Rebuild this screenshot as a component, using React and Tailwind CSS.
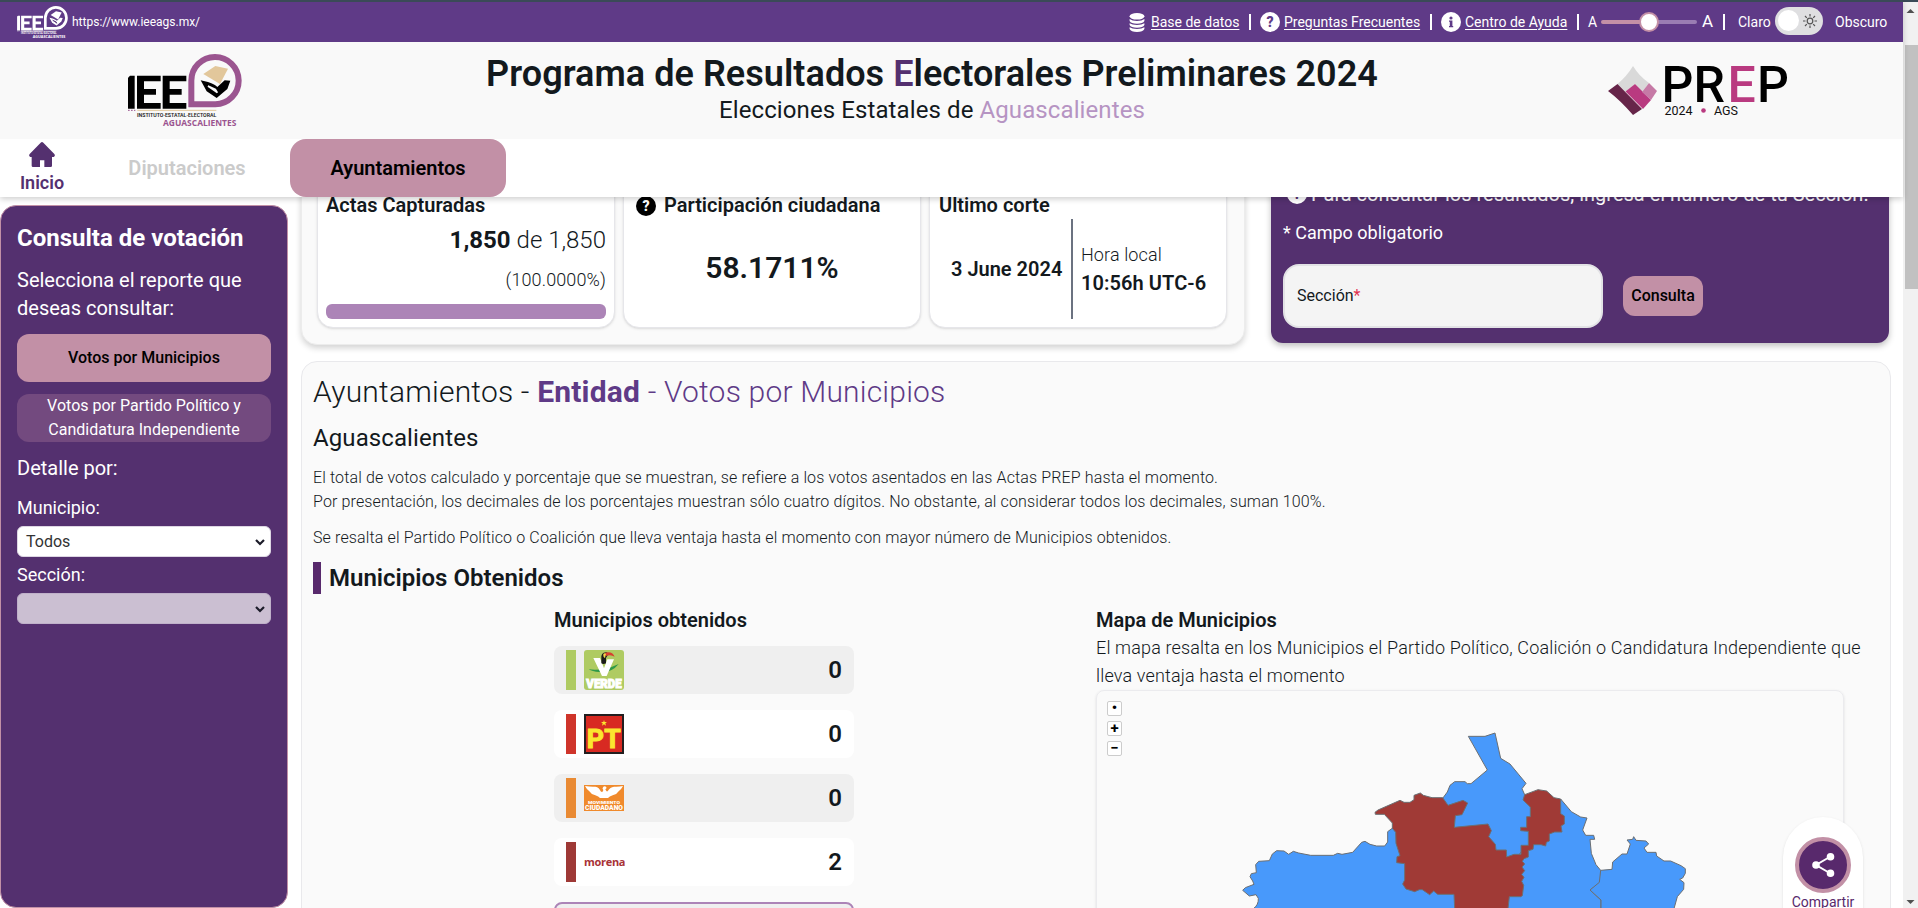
import React from "react";

const parties = [
  { bar: "bg-[#afcb62]", row: "bg-[#efefef]", votes: 0, logo: <VerdeLogo /> },
  { bar: "bg-[#cf352b]", row: "bg-white", votes: 0, logo: <PtLogo /> },
  { bar: "bg-[#e98a33]", row: "bg-[#efefef]", votes: 0, logo: <McLogo /> },
  {
    bar: "bg-[#9e3936]",
    row: "bg-white",
    votes: 2,
    logo: (
      <span className="block w-10 font-['Open_Sans',sans-serif] text-[11px] leading-[38px] font-bold tracking-[-0.3px] text-[#a83236]">
        morena
      </span>
    ),
  },
];

function VerdeLogo() {
  return (
    <svg className="size-10" viewBox="0 0 120 120">
      <rect width="120" height="120" rx="9" fill="#afcb62" />
      <path d="M14 58Q58 64 104 42Q82 70 46 66Q24 65 14 58Z" fill="#2f9a48" />
      <path d="M28 24H48L60 55L70 28H90L68 78H54Z" fill="#fff" />
      <path d="M52 26Q50 8 66 7Q72 6 72 14L66 24V40Q58 44 52 40Z" fill="#1c1c1a" />
      <path d="M62 9Q84 2 92 20Q80 12 66 18Z" fill="#d8402f" />
      <path d="M58 12Q62 8 66 12L63 24Q57 22 58 12Z" fill="#f7d54b" />
      <text x="60" y="114" textAnchor="middle" fill="#fff" stroke="#fff" strokeWidth="3" fontFamily="Roboto, sans-serif" fontWeight="900" fontSize="37" textLength="106" lengthAdjust="spacingAndGlyphs">VERDE</text>
    </svg>
  );
}

function PtLogo() {
  return (
    <svg className="size-10" viewBox="0 0 120 120">
      <rect x="3" y="3" width="114" height="114" fill="#d82a22" stroke="#231f20" strokeWidth="6" />
      <path d="M60 18L62 24H69L64 28L66 35L60 31L54 35L56 28L51 24H58Z" fill="#fbe52f" />
      <g fill="#fbe52f" stroke="#fbe52f" strokeWidth="3" fontFamily="Roboto, sans-serif" fontWeight="700" fontSize="80">
        <text x="8" y="102">P</text>
        <text x="61" y="102">T</text>
      </g>
    </svg>
  );
}

function McLogo() {
  return (
    <svg className="h-10 w-10" viewBox="0 0 120 120">
      <rect y="21" width="120" height="78" fill="#f08a2c" />
      <path d="M3 24Q20 27 34 26Q46 28 50 40Q56 45 58 36Q53 32 58 26Q66 23 68 30L64 34Q68 44 72 38Q78 27 90 26Q104 27 117 24Q112 34 104 40Q98 50 86 52Q76 56 72 60H48Q44 56 34 52Q22 50 16 40Q8 34 3 24Z" fill="#fff" />
      <text x="60" y="78" textAnchor="middle" fill="#fff" fontFamily="Roboto, sans-serif" fontWeight="900" fontSize="13" textLength="96" lengthAdjust="spacingAndGlyphs">MOVIMIENTO</text>
      <text x="60" y="95" textAnchor="middle" fill="#fff" fontFamily="Roboto, sans-serif" fontWeight="900" fontSize="20" textLength="114" lengthAdjust="spacingAndGlyphs">CIUDADANO</text>
    </svg>
  );
}

function IeeLogo({ className, ink, ring, paper, sub, place }) {
  return (
    <svg className={className} viewBox="0 0 342 222">
      <g fill={ink}>
        <path d="M6 65H20V164H0V71Z" />
        <path d="M27 65H98V82H48V105H84V122H48V147H98V164H27Z" />
        <path d="M104 65H175V82H125V105H161V122H125V147H175V164H104Z" />
      </g>
      <path d="M190 151V80A71 71 0 1 1 262 151Z" fill="none" stroke={ring} strokeWidth="18" />
      <path d="M226 60L262 36L300 44L276 90Z" fill={paper} />
      <path d="M218 79L240 84Q262 92 268 99L290 79L307 80L298 105L266 132L236 112Z" fill={ink} />
      <path d="M240 96L262 106L268 116Z" stroke={sub === "#fff" ? "#5f3a87" : "#f9f9f9"} strokeWidth="5" />
      <path d="M0 169H22" stroke={ring} strokeWidth="3" strokeDasharray="5 4" />
      <path d="M28 169H265" stroke={paper} strokeWidth="3" />
      <text x="27" y="189" fill={sub} fontFamily="Roboto, sans-serif" fontWeight="600" fontSize="18" textLength="238" lengthAdjust="spacingAndGlyphs">INSTITUTO·ESTATAL·ELECTORAL</text>
      <text x="105" y="216" fill={place} fontFamily="'Open Sans', sans-serif" fontWeight="700" fontSize="25" textLength="220" lengthAdjust="spacingAndGlyphs">AGUASCALIENTES</text>
    </svg>
  );
}

function HelpMark({ className, glyph, fill, ink }) {
  return (
    <svg className={className} viewBox="0 0 20 20">
      <circle cx="10" cy="10" r="10" fill={fill} />
      <text x="10" y="15" textAnchor="middle" fill={ink} fontFamily="Roboto, sans-serif" fontWeight="900" fontSize="14">{glyph}</text>
    </svg>
  );
}

function InfoMark() {
  return (
    <svg className="size-5" viewBox="0 0 20 20">
      <circle cx="10" cy="10" r="10" fill="#fff" />
      <circle cx="10" cy="6" r="1.6" fill="#5f3a87" />
      <path d="M8 8.5H11.4V14H12.2V15.2H8V14H8.8V9.8H8Z" fill="#5f3a87" />
    </svg>
  );
}

function DatabaseIcon() {
  return (
    <svg className="h-[19px] w-4" viewBox="0 0 16 19" fill="#fff">
      <ellipse cx="8" cy="3.3" rx="7.4" ry="3.3" />
      <path d="M.6 6Q3 8 8 8T15.400 6V8Q14 10.800 8 10.800T.6 8Z" />
      <path d="M.6 10.200Q3 12 8 12T15.400 10.200V12Q14 14.800 8 14.800T.6 12Z" />
      <path d="M.6 14.300Q3 16 8 16T15.400 14.300V16Q14 19 8 19T.6 16Z" />
    </svg>
  );
}

function TopBar() {
  return (
    <div className="flex h-[42px] items-center border-t-2 border-[#3a4a57] bg-[#5f3a87] pr-[13px] pl-[17px] text-[14px] text-white">
      <IeeLogo className="h-[33px] w-[51px]" ink="#fff" ring="#fff" paper="#fff" sub="#fff" place="#fff" />
      <span className="ml-1 w-[128px] text-[12px] whitespace-nowrap">https://www.ieeags.mx/</span>
      <div className="ml-auto flex items-center">
        <DatabaseIcon />
        <span className="ml-1.5 w-[88px] whitespace-nowrap underline underline-offset-2">Base de datos</span>
        <span className="ml-[10px] h-4 w-0.5 bg-white" />
        <HelpMark className="ml-[9px] size-5" glyph="?" fill="#fff" ink="#5f3a87" />
        <span className="ml-1 w-[136px] whitespace-nowrap underline underline-offset-2">Preguntas Frecuentes</span>
        <span className="mr-[9px] ml-[10px] h-4 w-0.5 bg-white" />
        <InfoMark />
        <span className="ml-1 w-[102px] whitespace-nowrap underline underline-offset-2">Centro de Ayuda</span>
        <span className="ml-[10px] h-4 w-0.5 bg-white" />
        <span className="ml-[9px] w-[9px]">A</span>
        <div className="relative ml-1 flex h-1 w-24 items-center">
          <span className="h-1 w-12 rounded-l bg-[#c490a6]" />
          <span className="h-1 w-12 rounded-r bg-[#9a7db3]" />
          <span className="absolute top-[-8px] left-[38px] size-5 rounded-full border-2 border-[#c490a6] bg-white" />
        </div>
        <span className="ml-[5px] w-[11px] text-[17px]">A</span>
        <span className="ml-[10px] h-4 w-0.5 bg-white" />
        <span className="ml-[13px] w-[33px]">Claro</span>
        <div className="mt-[-3px] ml-1 flex h-7 w-12 items-center rounded-full bg-[#dfdfe1] pr-[5px] pl-[3px]">
          <span className="size-[21px] rounded-full bg-white" />
          <svg className="ml-auto size-4" viewBox="0 0 16 16" fill="none" stroke="#555" strokeWidth="1.200">
            <circle cx="8" cy="8" r="2.800" />
            <path d="M8 1V3.500M8 12.500V15M1 8H3.500M12.500 8H15M3 3L4.800 4.800M11.200 11.200L13 13M13 3L11.200 4.800M4.800 11.200L3 13" />
          </svg>
        </div>
        <span className="ml-[12px] w-[55px]">Obscuro</span>
      </div>
    </div>
  );
}

function PrepLogo() {
  return (
    <svg className="h-[80px] w-[184px]" viewBox="0 -20 184 80">
      <path d="M25 0Q31 10 41 17L34 26L27 18L17.500 26L9.500 18Q19 10 25 0Z" fill="#d9d9d9" />
      <path d="M9.500 18L34 43L25 49Q12 34 0 25Z" fill="#662549" />
      <path d="M27 18L43 34L35 43L17.500 25.500Z" fill="#b93a80" />
      <path d="M41 17L49 25L43 34L34 26Z" fill="#c67aa6" />
      <g fontFamily="Roboto, sans-serif" fontWeight="500" fontSize="50" fill="#000">
        <text x="53.500" y="36">P</text>
        <text x="85.500" y="36">R</text>
        <text x="119.500" y="36" fill="#b93a80">E</text>
        <text x="149" y="36">P</text>
      </g>
      <g fontFamily="Roboto, sans-serif" fontSize="12.500" fill="#111">
        <text x="56.500" y="49">2024</text>
        <text x="106" y="49">AGS</text>
      </g>
      <circle cx="95.500" cy="44.500" r="2.300" fill="#b93a80" />
    </svg>
  );
}

function Header() {
  return (
    <header className="relative z-10 bg-white shadow-[0_2px_6px_rgba(0,0,0,0.2)]">
      <TopBar />
      <div className="flex h-[97px] bg-[#f9f9f9] pr-[111px] pl-[128px]">
        <IeeLogo className="mt-3 h-[74px] w-[114px]" ink="#000" ring="#9b5590" paper="#e2c79b" sub="#222" place="#9b5590" />
        <div className="flex flex-1 flex-col items-center pt-[10px] pl-[14px] text-[#13191d]">
          <h1 className="text-[36px] leading-[44px] font-semibold tracking-[0.05px] whitespace-nowrap">
            Programa de Resultados <span className="text-[#54306f]">E</span>lectorales Preliminares 2024
          </h1>
          <h2 className="text-[24px] leading-[28px] tracking-[0.1px] whitespace-nowrap">
            Elecciones Estatales de <span className="text-[#b694c3]">Aguascalientes</span>
          </h2>
        </div>
        <div className="mt-1"><PrepLogo /></div>
      </div>
      <nav className="flex h-[58px] text-[20px] font-semibold">
        <div className="flex w-[84px] flex-col items-center pt-[3px] text-[18px] leading-[26px] text-[#54306f]">
          <svg className="h-[25px] w-[26px] shrink-0" viewBox="0 0 78 75" fill="#54306f">
            <path d="M39 0Q41 0 43 2L76 36Q80 43 74 45H69V71Q69 75 65 75H46V55H33V75H12Q8 75 8 71V45H4Q-2 43 2 36L35 2Q37 0 39 0Z" />
          </svg>
          <span className="mt-[3px]">Inicio</span>
        </div>
        <div className="flex w-[206px] items-center justify-center text-[#cbcbcb]">Diputaciones</div>
        <div className="flex w-[216px] items-center justify-center rounded-2xl bg-[#c290a6] text-black">Ayuntamientos</div>
      </nav>
    </header>
  );
}

function SelectBox({ value, className }) {
  return (
    <div className={"flex h-[31px] items-center justify-between rounded-md border pr-[4px] pl-2 text-[16px] text-[#333] " + className}>
      <span>{value}</span>
      <svg className="h-3 w-3" viewBox="0 0 12 12" fill="none" stroke="#1c1c2a" strokeWidth="2.200">
        <path d="M2 4L6 8L10 4" />
      </svg>
    </div>
  );
}

function Sidebar() {
  return (
    <aside className="mt-2 flex h-[703px] w-[288px] shrink-0 flex-col rounded-2xl border border-[#c290a6] bg-[#54306f] px-4 text-[20px] text-white">
      <h2 className="mt-[16px] text-[24px] leading-8 font-bold whitespace-nowrap">Consulta de votación</h2>
      <p className="mt-[12px] leading-7 whitespace-nowrap">Selecciona el reporte que<br />deseas consultar:</p>
      <button className="mt-3 h-12 rounded-xl bg-[#c290a6] text-[16px] font-medium text-black">Votos por Municipios</button>
      <button className="mt-3 h-12 rounded-xl bg-[#734a7f] text-[16px] leading-6">Votos por Partido Político y<br />Candidatura Independiente</button>
      <p className="mt-3 leading-7">Detalle por:</p>
      <p className="mt-[14px] text-[18px] leading-6">Municipio:</p>
      <SelectBox value="Todos" className="mt-[6px] border-[#ddd6e3] bg-white" />
      <p className="mt-[6px] text-[18px] leading-6">Sección:</p>
      <SelectBox value="" className="mt-[6px] border-[#bfb0c9] bg-[#cbbfd2]" />
    </aside>
  );
}

function StatCard({ children }) {
  return <div className="flex w-[298px] shrink-0 flex-col rounded-b-2xl border border-[#e6e6ea] bg-white px-2 pt-[34px] text-[#13191d] shadow-sm">{children}</div>;
}

function Summary() {
  return (
    <div className="flex">
      <section className="flex h-[188px] w-[944px] gap-2 rounded-b-2xl border border-[#ececec] bg-[#fafafa] pb-4 pl-[15px] shadow-[0_3px_6px_rgba(0,0,0,0.18)]">
        <StatCard>
          <h3 className="text-[20px] leading-[25px] font-semibold">Actas Capturadas</h3>
          <p className="mt-[6px] text-right text-[24px] leading-8"><b className="font-bold">1,850</b> <span className="font-light">de 1,850</span></p>
          <p className="mt-[10px] text-right text-[18px] leading-7 font-light tracking-[0.12px]">(100.0000%)</p>
          <div className="mt-[10px] h-[15px] rounded-md bg-[#ac84b7]" />
        </StatCard>
        <StatCard>
          <h3 className="flex items-center pl-1 text-[20px] leading-[25px] font-semibold">
            <HelpMark className="mr-2 size-5" glyph="?" fill="#000" ink="#fff" />
            Participación ciudadana
          </h3>
          <p className="mt-[27px] text-center text-[30px] leading-[46px] font-semibold">58.1711%</p>
        </StatCard>
        <StatCard>
          <h3 className="pl-px text-[20px] leading-[25px] font-semibold">Último corte</h3>
          <div className="mt-px ml-px flex h-[100px] items-center text-[20px] leading-7">
            <b className="w-[132px] pl-3 font-semibold whitespace-nowrap">3 June 2024</b>
            <div className="flex h-full flex-col justify-center border-l-2 border-[#6b7280] pl-2">
              <span className="text-[18px] font-light tracking-[0.12px]">Hora local</span>
              <b className="font-semibold tracking-[0.08px] whitespace-nowrap">10:56h UTC-6</b>
            </div>
          </div>
        </StatCard>
      </section>
      <section className="ml-[26px] flex h-[186px] w-[618px] flex-col rounded-b-xl bg-[#54306f] px-[12px] text-white shadow-[0_3px_6px_rgba(0,0,0,0.25)]">
        <p className="mt-[23px] flex items-center text-[20px] leading-[28px] whitespace-nowrap">
          <HelpMark className="mr-1 ml-1 size-5" glyph="?" fill="#fff" ink="#54306f" />
          Para consultar los resultados, ingresa el número de tu Sección.
        </p>
        <p className="mt-[11px] text-[18px] leading-7">* Campo obligatorio</p>
        <div className="mt-[17px] flex items-center">
          <div className="flex h-16 w-[320px] items-center rounded-2xl border-2 border-[#e2e2e5] bg-[#f4f4f4] pl-3 text-[16px] text-[#13191d]">
            Sección<span className="text-[#e0304f]">*</span>
          </div>
          <button className="ml-5 h-10 w-20 rounded-xl bg-[#c290a6] text-[16px] font-medium text-black">Consulta</button>
        </div>
      </section>
    </div>
  );
}

function MunicipalityMap() {
  return (
    <svg className="h-[188px] w-[480px]" viewBox="0 0 1440 564" stroke="#6b6f73" strokeWidth="3" strokeLinejoin="round">
      <g fill="#4899fb">
        <path d="M100 566Q116 555 115 535L108 524L88 528L68 511L76 503L102 493L98 483L90 470L94 461L109 458L107 434L116 424L148 422L157 402L170 392L192 393L206 403L220 394L236 399L272 406H340L353 400L366 403L398 397L425 367L435 364L450 373L470 378H494L503 366V335L518 324L600 300L720 500V566Z" />
        <path d="M668 235L682 216L690 196L704 185H735L742 191H753L802 150L745 49H795L825 39L842 115L870 132L918 190L906 206L914 224L950 300L920 400L860 420L700 380L650 300Z" />
        <path d="M1022 237L1054 275L1082 291L1101 294L1088 330L1097 346H1121L1124 358H1110L1114 400L1128 434L1142 451V487L1110 510L1143 540V566H860V500L900 400L1000 300Z" />
        <path d="M1142 451L1176 448L1178 426L1206 402H1221L1231 372L1221 360L1238 358L1241 350L1248 361L1278 363L1286 372L1272 384L1281 397H1308L1310 408L1332 423H1352L1383 437L1396 446V460L1388 474L1379 478L1392 488L1391 508L1372 530L1362 566H1143V540L1110 510L1138 487Z" />
      </g>
      <g fill="#a03a36">
        <path d="M465 277L474 270L540 241L552 247H570L582 239V226L601 219L610 226L636 233H668L684 256L729 241L743 249L726 284L706 287L703 322L804 312L814 332L806 350L826 373L828 390H859L860 411L882 403H903V376H925V334L902 332V322H920V290H931V261L909 240L914 224L954 209L980 213L1002 233L1022 237V281L1033 288V312L1023 318L1026 336H1004L988 342V363L979 367L977 378L963 374H941L939 388L925 392V411L912 416L907 424L914 432L906 441L914 452L905 463L912 472L905 484L911 496L907 527L902 530H868L864 566H704L702 523H653L641 513L629 524L607 509H598L584 515L558 507L548 492L554 480V431L530 428L531 410L540 407L528 370L527 337L517 325V309L493 283H466Z" />
      </g>
    </svg>
  );
}

function Results() {
  return (
    <section className="mt-4 flex h-[560px] w-[1590px] flex-col rounded-t-2xl border border-[#e9e9ec] bg-[#fafafa] px-[11px] text-[#13191d]">
      <h2 className="mt-[7px] text-[30px] leading-[46px] font-light tracking-[0.2px]">
        Ayuntamientos - <span className="text-[#5f3a87]"><b className="font-bold">Entidad</b> - Votos por Municipios</span>
      </h2>
      <h3 className="mt-[7px] text-[24px] leading-8 tracking-[0.1px]">Aguascalientes</h3>
      <div className="mt-3 text-[16px] leading-6 font-light tracking-[0.13px]">
        <p>El total de votos calculado y porcentaje que se muestran, se refiere a los votos asentados en las Actas PREP hasta el momento.</p>
        <p>Por presentación, los decimales de los porcentajes muestran sólo cuatro dígitos. No obstante, al considerar todos los decimales, suman 100%.</p>
        <p className="mt-3">Se resalta el Partido Político o Coalición que lleva ventaja hasta el momento con mayor número de Municipios obtenidos.</p>
      </div>
      <h3 className="mt-3 border-l-8 border-[#58296c] pl-2 text-[24px] leading-8 font-semibold">Municipios Obtenidos</h3>
      <div className="flex pt-3">
        <div className="ml-[241px] w-[300px]">
          <h4 className="text-[20px] leading-7 font-semibold">Municipios obtenidos</h4>
          <div className="mt-3 flex flex-col gap-4">
            {parties.map((party, i) => (
              <div key={i} className={"flex h-12 items-center rounded-lg px-3 " + party.row}>
                <span className={"h-10 w-[10px] " + party.bar} />
                <span className="ml-2">{party.logo}</span>
                <span className="ml-auto text-[24px] font-semibold">{party.votes}</span>
              </div>
            ))}
            <div className="h-12 rounded-lg border-2 border-[#ac84b7] bg-[#efefef]" />
          </div>
        </div>
        <div className="ml-[242px] w-[780px]">
          <h4 className="text-[20px] leading-7 font-semibold">Mapa de Municipios</h4>
          <p className="text-[18px] leading-7 font-light tracking-[0.15px]">El mapa resalta en los Municipios el Partido Político, Coalición o Candidatura Independiente que<br />lleva ventaja hasta el momento</p>
          <div className="flex h-[300px] w-[748px] rounded-t-lg border border-[#ebebee] pt-[10px] pl-[10px] shadow-sm">
            <div className="flex h-[55px] w-[15px] flex-col gap-[5px] text-[15px] leading-[13px] font-bold text-black">
              {["•", "+", "−"].map((sign) => (
                <span key={sign} className="flex h-[15px] items-center justify-center rounded-[2px] border border-[#ccc] bg-white">{sign}</span>
              ))}
            </div>
            <div className="mt-[19px] ml-[98px]"><MunicipalityMap /></div>
          </div>
        </div>
      </div>
    </section>
  );
}

function ShareButton() {
  return (
    <div className="absolute top-[817px] left-[1783px] flex h-[140px] w-20 flex-col items-center rounded-full bg-white pt-5 text-[#58296c] shadow-sm">
      <span className="flex size-14 items-center justify-center rounded-full border-4 border-[#c290a6] bg-[#58296c]">
        <svg className="size-6" viewBox="0 0 24 24" fill="#fff" stroke="#fff" strokeWidth="2">
          <path d="M19.500 3.500L5 12L19.500 20.500" fill="none" />
          <circle cx="19.500" cy="3.800" r="2.800" />
          <circle cx="5" cy="12" r="2.800" />
          <circle cx="19.500" cy="20.200" r="2.800" />
        </svg>
      </span>
      <span className="text-[14px] leading-[18px]">Compartir</span>
    </div>
  );
}

function Scrollbar() {
  return (
    <div className="flex w-[15px] shrink-0 flex-col items-center border-t-2 border-[#3a4a57] bg-[#f1f1f1]">
      <svg className="h-[43px] w-[15px] shrink-0" viewBox="0 0 15 43"><path d="M3.500 11L7.500 7L11.500 11Z" fill="#505050" /></svg>
      <div className="ml-[2px] h-[244px] w-[13px] bg-[#c1c1c1]" />
      <svg className="mt-auto h-[15px] w-[15px]" viewBox="0 0 15 15"><path d="M3.500 7L7.500 11L11.500 7Z" fill="#505050" /></svg>
    </div>
  );
}

export default function App() {
  return (
    <div className="relative flex h-[908px] w-[1918px] overflow-hidden bg-white font-[Roboto,sans-serif]">
      <div className="w-[1903px]">
        <Header />
        <div className="flex">
          <Sidebar />
          <main className="mt-[-40px] ml-[13px]">
            <Summary />
            <Results />
          </main>
        </div>
      </div>
      <ShareButton />
      <Scrollbar />
    </div>
  );
}
